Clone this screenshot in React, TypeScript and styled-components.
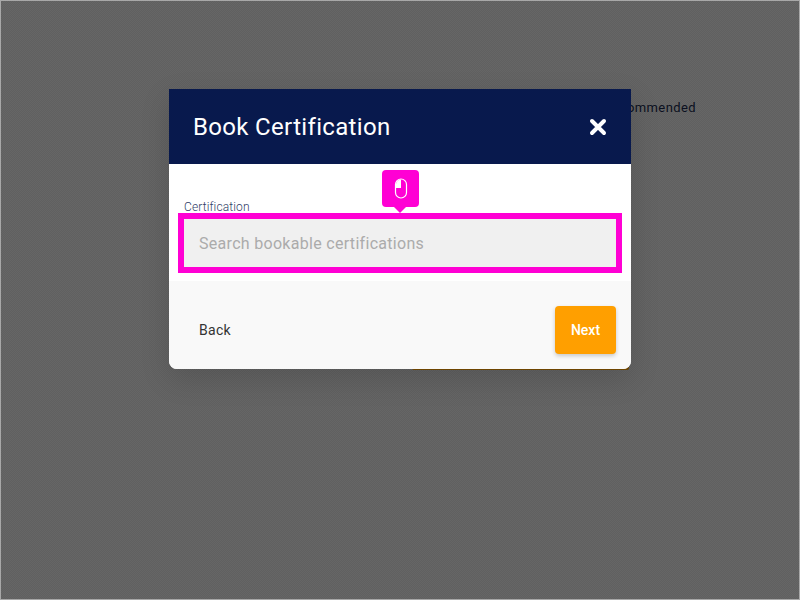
import * as React from "react";
import styled, { createGlobalStyle } from "styled-components";

const GlobalStyle = createGlobalStyle`
  html, body {
    margin: 0;
    height: 100%;
    font-family: Roboto, "Liberation Sans", sans-serif;
  }
  #root {
    height: 100%;
  }
`;

const Page = styled.div`
  position: relative;
  box-sizing: border-box;
  width: 800px;
  height: 600px;
  overflow: hidden;
  padding: 88px 0 0 168px;
  border: 1px solid #a8a8a8;
  background-color: #636363;
  background-image: repeating-conic-gradient(#606060 0 25%, #666666 0 50%);
  background-size: 2px 2px;
`;

const BehindText = styled.span`
  position: absolute;
  right: 103px;
  top: 99px;
  font-size: 13px;
  line-height: 15px;
  letter-spacing: 0.4px;
  color: #0b1020;
`;

const BehindBar = styled.div`
  position: absolute;
  left: 411px;
  top: 365px;
  width: 217px;
  height: 4px;
  border-radius: 2px;
  background: #6e4500;
`;

const ModalShadow = styled.div`
  width: 462px;
  border-radius: 0 0 8px 8px;
  box-shadow: 0 10px 30px rgba(0, 0, 0, 0.14);
`;

const Modal = styled.div`
  position: relative;
  display: flex;
  flex-direction: column;
  width: 462px;
  height: 280px;
  border-radius: 0 0 8px 8px;
  overflow: hidden;
  background: #fff;
`;

const Header = styled.header`
  display: flex;
  align-items: center;
  justify-content: space-between;
  height: 75px;
  padding: 0 24px;
  flex: none;
  background: #08194d;
`;

const Title = styled.h1`
  margin: 0;
  font-size: 24px;
  line-height: 28px;
  font-weight: 400;
  letter-spacing: 0.33px;
  color: #fff;
`;

const CloseButton = styled.button`
  display: flex;
  padding: 0;
  border: 0;
  background: none;
`;

const Body = styled.div`
  position: relative;
  display: flex;
  flex-direction: column;
  height: 117px;
  box-sizing: border-box;
  padding: 36px 9px 8px;
  flex: none;
`;

const FieldLabel = styled.label`
  height: 13px;
  margin-left: 6px;
  font-size: 12px;
  line-height: 15px;
  letter-spacing: 0.12px;
  font-weight: 300;
  color: #2f3c66;
`;

const Highlight = styled.div`
  display: flex;
  height: 60px;
  box-sizing: border-box;
  border: 6px solid #ff00d4;
`;

const SearchInput = styled.input`
  flex: 1;
  min-width: 0;
  box-sizing: border-box;
  padding: 0 15px;
  border: 0;
  outline: 0;
  font-family: inherit;
  font-size: 16px;
  letter-spacing: 0.3px;
  background: #f0f0f0;

  &::placeholder {
    color: #ababab;
    opacity: 1;
  }
`;

const MouseTip = styled.div`
  position: absolute;
  left: 213px;
  top: 6px;
  display: flex;
  align-items: center;
  justify-content: center;
  width: 37px;
  height: 37px;
  border-radius: 4px;
  background: #ff00d4;

  &::after {
    content: "";
    position: absolute;
    left: 12px;
    bottom: -6px;
    border-style: solid;
    border-width: 6px 6px 0;
    border-color: #ff00d4 transparent transparent;
  }
`;

const Footer = styled.footer`
  display: flex;
  align-items: center;
  justify-content: space-between;
  flex: 1;
  padding: 10px 15px 0 30px;
  background: #f9f9f9;
`;

const BackButton = styled.button`
  padding: 0;
  border: 0;
  background: none;
  font-family: inherit;
  font-size: 14px;
  letter-spacing: 0.3px;
  color: #333;
`;

const NextButton = styled.button`
  width: 61px;
  height: 48px;
  padding: 0;
  border: 0;
  border-radius: 4px;
  background: #ff9f00;
  box-shadow: 0 2px 4px rgba(0, 0, 0, 0.2);
  font-family: inherit;
  font-size: 14px;
  font-weight: 500;
  color: #fff;
`;

const App = () => (
  <>
    <GlobalStyle />
    <Page>
      <BehindText>Recommended</BehindText>
      <BehindBar />
      <ModalShadow>
        <Modal>
          <Header>
            <Title>Book Certification</Title>
            <CloseButton aria-label="Close">
              <svg width="18" height="18" viewBox="0 0 18 18">
                <path
                  d="M3 3l12 12M15 3L3 15"
                  stroke="#fff"
                  strokeWidth="4"
                  strokeLinecap="round"
                  fill="none"
                />
              </svg>
            </CloseButton>
          </Header>
          <Body>
            <MouseTip>
              <svg width="14" height="21" viewBox="0 0 14 21">
                <rect x="1.5" y="1" width="11" height="19" rx="5.5" fill="none" stroke="#fff" strokeWidth="1.2" />
                <path d="M7 1.5A5 5 0 0 0 2 6.5V10H7Z" fill="#fff" />
              </svg>
            </MouseTip>
            <FieldLabel>Certification</FieldLabel>
            <Highlight>
              <SearchInput placeholder="Search bookable certifications" />
            </Highlight>
          </Body>
          <Footer>
            <BackButton>Back</BackButton>
            <NextButton>Next</NextButton>
          </Footer>
        </Modal>
      </ModalShadow>
    </Page>
  </>
);

export default App;
